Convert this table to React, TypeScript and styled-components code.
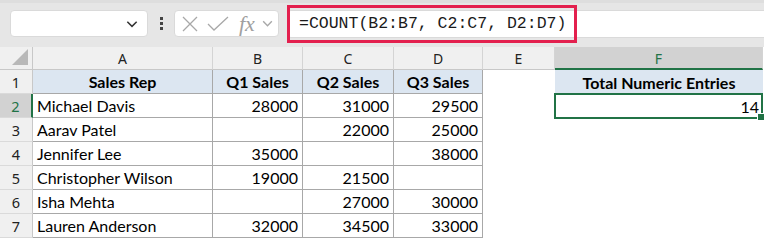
import { Fragment } from "react";
import styled, { createGlobalStyle } from "styled-components";

const GlobalStyle = createGlobalStyle`
  html, body {
    margin: 0;
    padding: 0;
    background: #ffffff;
    overflow: hidden;
  }
  * {
    box-sizing: border-box;
  }
`;

const Sheet = styled.div`
  width: 764px;
  height: 240px;
  display: flex;
  flex-direction: column;
  font-family: Lato, "Liberation Sans", sans-serif;
`;

const Toolbar = styled.div`
  height: 47px;
  background: #e6e6e6;
  border-top: 3px solid #dedede;
  display: flex;
  align-items: center;
  padding: 0 0 3px 10px;
`;

const NameBox = styled.div`
  width: 138px;
  height: 27px;
  background: #ffffff;
  border: 1px solid #dadada;
  border-radius: 4px;
  display: flex;
  align-items: center;
  justify-content: flex-end;
  padding-right: 8px;
  color: #333;
`;

const Grip = styled.div`
  width: 26px;
  display: flex;
  flex-direction: column;
  align-items: center;
  gap: 2px;
  span {
    width: 3px;
    height: 3px;
    background: #444;
  }
`;

const FxBox = styled.div`
  width: 105px;
  height: 27px;
  background: #ffffff;
  border: 1px solid #dadada;
  border-radius: 4px;
  display: flex;
  align-items: center;
  padding: 0 4px 0 5px;
  gap: 6px;
  color: #a8a8a8;
`;

const Fx = styled.span`
  font-family: "Liberation Serif", serif;
  font-style: italic;
  font-size: 22px;
  line-height: 1;
  color: #a0a0a0;
  margin-left: 3px;
`;

const FormulaBar = styled.div`
  position: relative;
  flex: 1;
  height: 28px;
  margin-left: 8px;
  background: #ffffff;
  border: 1px solid #dadada;
  border-right: none;
  border-radius: 4px 0 0 4px;
  display: flex;
  align-items: center;
  padding-left: 11px;
  font-family: "Liberation Mono", "DejaVu Sans Mono", monospace;
  font-size: 16.5px;
  color: #1a1a1a;
`;

const Highlight = styled.div`
  position: absolute;
  left: -1px;
  top: -6px;
  width: 290px;
  height: 38px;
  border: 3px solid #e3204e;
  pointer-events: none;
`;

const Grid = styled.div`
  display: grid;
  grid-template-columns: 33px 180px 90px 91px 89px 72px 208px;
  grid-template-rows: 23px repeat(7, 24px);
  position: relative;
`;

const Corner = styled.div`
  background: #f0f0f0;
  border-right: 1px solid #c8c8c8;
  border-bottom: 1px solid #c8c8c8;
  position: relative;
  &::after {
    content: "";
    position: absolute;
    right: 4px;
    bottom: 4px;
    width: 0;
    height: 0;
    border-left: 16px solid transparent;
    border-bottom: 16px solid #b8b8b8;
  }
`;

const ColHead = styled.div<{ $sel?: boolean }>`
  background: ${(p) => (p.$sel ? "#d2d2d2" : "#f0f0f0")};
  color: ${(p) => (p.$sel ? "#217346" : "#222")};
  border-right: 1px solid #d4d4d4;
  border-bottom: ${(p) => (p.$sel ? "2px solid #217346" : "1px solid #c8c8c8")};
  display: flex;
  align-items: center;
  justify-content: center;
  font-family: "Noto Sans", sans-serif;
  font-size: 14px;
  padding-top: ${(p) => (p.$sel ? "1px" : "0")};
`;

const RowHead = styled.div<{ $sel?: boolean }>`
  background: ${(p) => (p.$sel ? "#d2d2d2" : "#f0f0f0")};
  color: ${(p) => (p.$sel ? "#217346" : "#222")};
  border-right: ${(p) => (p.$sel ? "2px solid #217346" : "1px solid #c8c8c8")};
  border-bottom: 1px solid #dadada;
  display: flex;
  align-items: center;
  justify-content: center;
  font-family: "Noto Sans", sans-serif;
  font-size: 14.5px;
`;

const Cell = styled.div<{ $head?: boolean; $num?: boolean; $table?: boolean }>`
  background: ${(p) => (p.$head ? "#dce6f1" : "#ffffff")};
  border-right: ${(p) => (p.$table ? "1px solid #a8a8a8" : "none")};
  border-bottom: ${(p) => (p.$table ? "1px solid #a8a8a8" : "none")};
  display: flex;
  align-items: center;
  justify-content: ${(p) => (p.$head ? "center" : p.$num ? "flex-end" : "flex-start")};
  padding: 0 4px;
  font-size: 16px;
  font-weight: ${(p) => (p.$head ? 700 : 400)};
  color: #000;
  white-space: nowrap;
`;

const Selection = styled.div`
  position: absolute;
  left: 554px;
  top: 46px;
  width: 209px;
  height: 26px;
  border: 2px solid #217346;
  pointer-events: none;
  &::after {
    content: "";
    position: absolute;
    right: -4px;
    bottom: -4px;
    width: 6px;
    height: 6px;
    background: #217346;
    border: 1px solid #fff;
  }
`;

const Chevron = ({ size = 12 }: { size?: number }) => (
  <svg width={size} height={size} viewBox="0 0 12 12" fill="none">
    <path d="M2 4l4 4 4-4" stroke="currentColor" strokeWidth="1.3" />
  </svg>
);

const headers = ["Sales Rep", "Q1 Sales", "Q2 Sales", "Q3 Sales"];

const rows: [string, string, string, string][] = [
  ["Michael Davis", "28000", "31000", "29500"],
  ["Aarav Patel", "", "22000", "25000"],
  ["Jennifer Lee", "35000", "", "38000"],
  ["Christopher Wilson", "19000", "21500", ""],
  ["Isha Mehta", "", "27000", "30000"],
  ["Lauren Anderson", "32000", "34500", "33000"],
];

export default function App() {
  return (
    <>
      <GlobalStyle />
      <Sheet>
        <Toolbar>
          <NameBox>
            <Chevron size={14} />
          </NameBox>
          <Grip>
            <span />
            <span />
            <span />
          </Grip>
          <FxBox>
            <svg width="20" height="20" viewBox="0 0 20 20">
              <path d="M3 3l14 14M17 3L3 17" stroke="#a8a8a8" strokeWidth="1.3" />
            </svg>
            <svg width="24" height="20" viewBox="0 0 24 20">
              <path d="M2 10l6 6L22 3" stroke="#a8a8a8" strokeWidth="1.3" fill="none" />
            </svg>
            <Fx>fx</Fx>
            <Chevron size={13} />
          </FxBox>
          <FormulaBar>
            =COUNT(B2:B7, C2:C7, D2:D7)
            <Highlight />
          </FormulaBar>
        </Toolbar>
        <Grid>
          <Corner />
          {["A", "B", "C", "D", "E", "F"].map((c) => (
            <ColHead key={c} $sel={c === "F"}>
              {c}
            </ColHead>
          ))}
          <RowHead>1</RowHead>
          {headers.map((h) => (
            <Cell key={h} $head $table>
              {h}
            </Cell>
          ))}
          <Cell />
          <Cell $head>Total Numeric Entries</Cell>
          {rows.map((r, i) => (
            <Fragment key={i}>
              <RowHead $sel={i === 0}>{i + 2}</RowHead>
              <Cell $table>{r[0]}</Cell>
              <Cell $table $num>
                {r[1]}
              </Cell>
              <Cell $table $num>
                {r[2]}
              </Cell>
              <Cell $table $num>
                {r[3]}
              </Cell>
              <Cell />
              <Cell $num>{i === 0 ? "14" : ""}</Cell>
            </Fragment>
          ))}
          <Selection />
        </Grid>
      </Sheet>
    </>
  );
}
